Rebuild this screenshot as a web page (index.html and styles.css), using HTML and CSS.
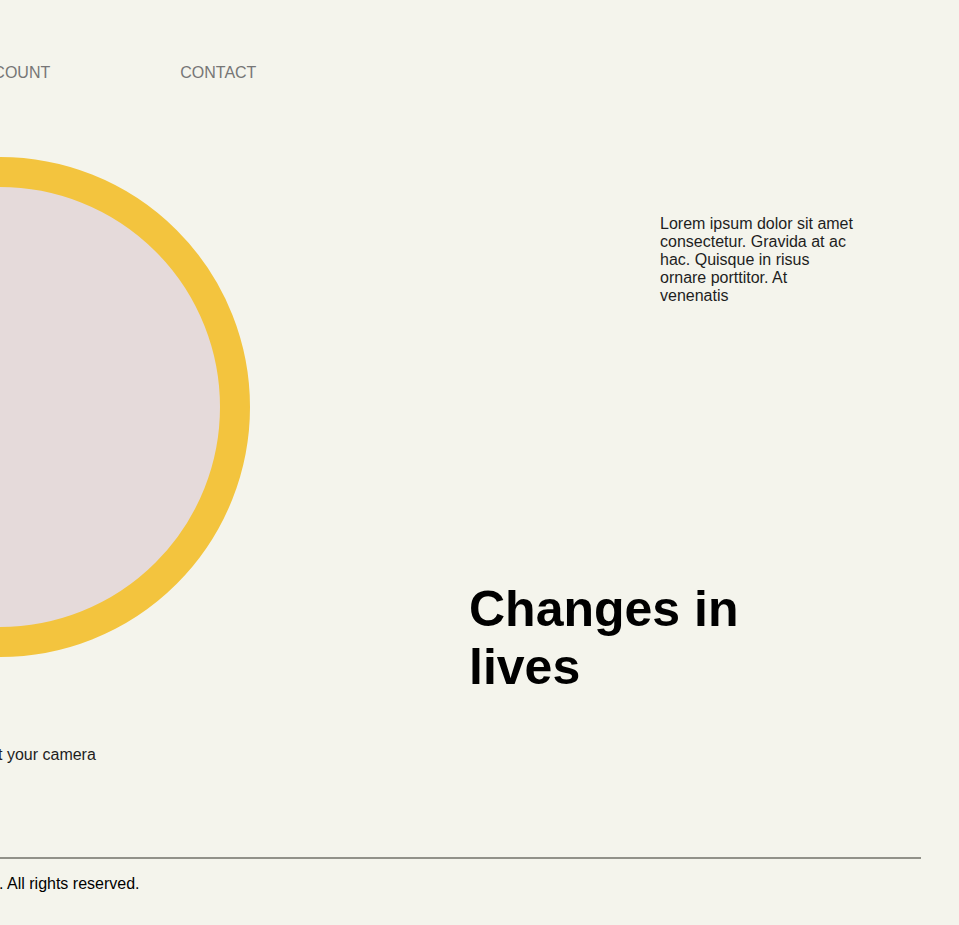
FILE: index.html
```html
<!DOCTYPE html>
<html lang="en">
<head>
<meta charset="utf-8">
<title>Changes in lives</title>
<link rel="stylesheet" href="styles.css">
</head>
<body>
<div class="page">
  <nav class="nav">
    <a href="#">ABOUT</a>
    <a href="#">ACCOUNT</a>
    <a href="#">CONTACT</a>
  </nav>
  <section class="hero">
    <div class="circle"></div>
    <div class="hero-text">
      <p class="intro">Lorem ipsum dolor sit amet consectetur. Gravida at ac hac. Quisque in risus ornare porttitor. At venenatis</p>
      <h1 class="title">Changes in<br>lives</h1>
    </div>
  </section>
  <p class="caption">Point your camera</p>
  <footer class="footer">
    <p class="copy">© 2024 Lumen Studio. All rights reserved.</p>
  </footer>
</div>
</body>
</html>
```
FILE: styles.css
```css
html, body {
  margin: 0;
  padding: 0;
  background: #f4f4ec;
  overflow: hidden;
}
body {
  font-family: "Liberation Sans", Arial, sans-serif;
  font-size: 16px;
  color: #1e1e1e;
}
.page {
  width: 1271px;
  margin-left: -300px;
  padding: 0 50px;
  box-sizing: border-box;
}
.nav {
  display: flex;
  gap: 130px;
  padding: 64px 0 0 36px;
}
.nav a {
  color: #767676;
  text-decoration: none;
}
.hero {
  display: flex;
  margin-top: 75px;
}
.circle {
  flex: none;
  width: 500px;
  height: 500px;
  box-sizing: border-box;
  border: 30px solid #f3c43e;
  border-radius: 50%;
  background: #e5dada;
}
.hero-text {
  margin-left: 219px;
  display: flex;
  flex-direction: column;
}
.intro {
  margin: 58px 0 0 191px;
  width: 200px;
  color: #1e1e1e;
}
.title {
  margin: 275px 0 0 0;
  font-size: 50px;
  font-weight: 700;
  color: #000;
}
.caption {
  margin: 50px 0 0 216px;
  color: #1e1e1e;
}
.footer {
  margin-top: 93px;
  border-top: 2px solid #919189;
}
.copy {
  margin: 16px 0 0 94px;
  color: #000;
}
```
